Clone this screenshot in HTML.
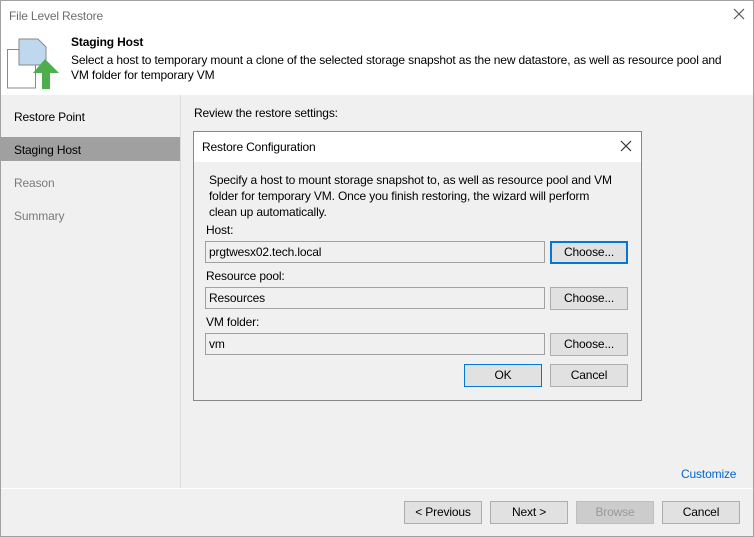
<!DOCTYPE html><html><head><style>
body{margin:0;width:754px;height:537px;position:relative;background:#fff;font-family:"Liberation Sans",sans-serif;font-size:12px;letter-spacing:-0.15px;color:#000;overflow:hidden}
.a{position:absolute}
.btn{position:absolute;height:21px;width:76px;border:1px solid #adadad;background:#e1e1e1;text-align:center;line-height:21px;font-size:12px}
.inp{position:absolute;left:205px;width:335px;height:20px;border:1px solid #a0a0a0;background:#f0f0f0;line-height:20px;padding-left:3px;font-size:12px}
</style></head><body>
<div class="a" style="left:1px;top:95px;width:752px;height:441px;background:#f0f0f0"></div>
<div class="a" style="left:0;top:0;width:752px;height:535px;border:1px solid #a0a0a0"></div>
<div class="a" style="left:9px;top:9px;color:#6d6d6d">File Level Restore</div>
<svg class="a" style="left:733px;top:8px" width="12" height="12"><path d="M1 1L11 11M11 1L1 11" stroke="#555" stroke-width="1.2"/></svg>
<svg class="a" style="left:0;top:32px" width="64" height="60">
<path d="M7.5 17.5h14l14 14v24.5h-28z" fill="#fff" stroke="#888"/>
<path d="M19 7h19l8 8v18H19z" fill="#c0d8ee" stroke="#888"/>
<path d="M45 27l14 14h-9v16h-8V41h-9z" fill="#4cae4c"/>
</svg>
<div class="a" style="left:71px;top:35px;font-weight:bold">Staging Host</div>
<div class="a" style="left:71px;top:53px;line-height:15px;width:670px">Select a host to temporary mount a clone of the selected storage snapshot as the new datastore, as well as resource pool and VM folder for temporary VM</div>
<div class="a" style="left:180px;top:95px;width:1px;height:393px;background:#dcdcdc"></div>
<div class="a" style="left:1px;top:137px;width:179px;height:24px;background:#a0a0a0"></div>
<div class="a" style="left:14px;top:110px">Restore Point</div>
<div class="a" style="left:14px;top:143px">Staging Host</div>
<div class="a" style="left:14px;top:176px;color:#7a7a7a">Reason</div>
<div class="a" style="left:14px;top:209px;color:#7a7a7a">Summary</div>
<div class="a" style="left:194px;top:106px">Review the restore settings:</div>
<div class="a" style="left:193px;top:131px;width:447px;height:268px;border:1px solid #888;background:#f0f0f0"></div>
<div class="a" style="left:194px;top:132px;width:447px;height:30px;background:#fff"></div>
<div class="a" style="left:202px;top:140px">Restore Configuration</div>
<svg class="a" style="left:620px;top:140px" width="12" height="12"><path d="M1 1L11 11M11 1L1 11" stroke="#333" stroke-width="1.2"/></svg>
<div class="a" style="left:209px;top:172px;line-height:16px;width:408px">Specify a host to mount storage snapshot to, as well as resource pool and VM folder for temporary VM. Once you finish restoring, the wizard will perform clean up automatically.</div>
<div class="a" style="left:206px;top:223px">Host:</div>
<div class="inp" style="top:241px">prgtwesx02.tech.local</div>
<div class="btn" style="left:550px;top:241px;border:2px solid #0078d7;height:19px;width:74px;line-height:19px">Choose...</div>
<div class="a" style="left:206px;top:269px">Resource pool:</div>
<div class="inp" style="top:287px">Resources</div>
<div class="btn" style="left:550px;top:287px">Choose...</div>
<div class="a" style="left:206px;top:315px">VM folder:</div>
<div class="inp" style="top:333px">vm</div>
<div class="btn" style="left:550px;top:333px">Choose...</div>
<div class="btn" style="left:464px;top:364px;border-color:#0078d7">OK</div>
<div class="btn" style="left:550px;top:364px">Cancel</div>
<div class="a" style="left:681px;top:467px;color:#0066cc">Customize</div>
<div class="a" style="left:1px;top:488px;width:752px;height:1px;background:#fff"></div>
<div class="btn" style="left:404px;top:501px">&lt; Previous</div>
<div class="btn" style="left:490px;top:501px">Next &gt;</div>
<div class="btn" style="left:576px;top:501px;color:#999;background:#ccc;border-color:#bfbfbf">Browse</div>
<div class="btn" style="left:662px;top:501px">Cancel</div>
</body></html>
